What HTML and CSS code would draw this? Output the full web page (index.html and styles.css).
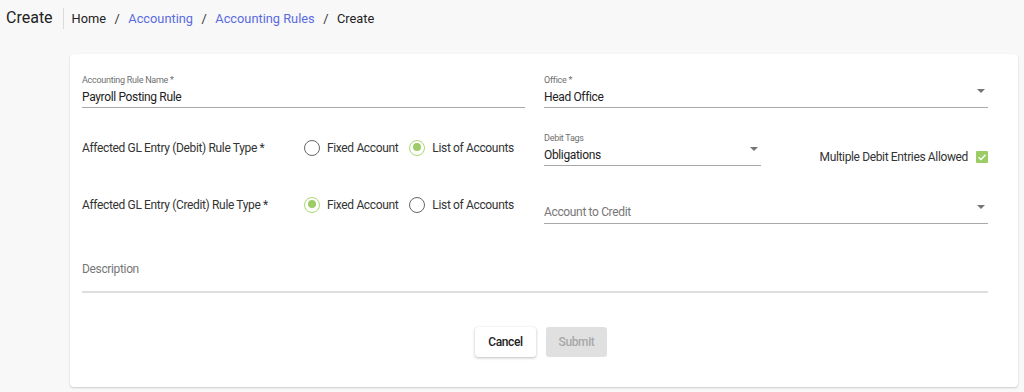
FILE: index.html
```html
<!DOCTYPE html>
<html>
<head>
<meta charset="utf-8">
<link rel="stylesheet" href="styles.css">
</head>
<body>
<header class="topbar">
  <h1 class="page-title">Create</h1>
  <nav class="crumbs">
    <span class="crumb">Home</span>
    <span class="sep">/</span>
    <a class="crumb link">Accounting</a>
    <span class="sep">/</span>
    <a class="crumb link">Accounting Rules</a>
    <span class="sep">/</span>
    <span class="crumb">Create</span>
  </nav>
</header>

<main class="card">
  <form class="form">
    <div class="row two">
      <div class="field">
        <div class="flabel">Accounting Rule Name *</div>
        <div class="fvalue">Payroll Posting Rule</div>
      </div>
      <div class="field select">
        <div class="flabel">Office *</div>
        <div class="fvalue">Head Office</div>
        <span class="arrow"></span>
      </div>
    </div>

    <div class="row two">
      <div class="radio-row">
        <span class="rlabel">Affected GL Entry (Debit) Rule Type *</span>
        <span class="radio"><span class="dot"></span>Fixed Account</span>
        <span class="radio on"><span class="dot"></span>List of Accounts</span>
      </div>
      <div class="debit-side">
        <div class="field select tags">
          <div class="flabel">Debit Tags</div>
          <div class="fvalue">Obligations</div>
          <span class="arrow"></span>
        </div>
        <div class="check">
          <span>Multiple Debit Entries Allowed</span>
          <span class="box"><svg width="12" height="12" viewBox="0 0 12 12"><path d="M2.6 6.2 L5 8.5 L9.6 3.8" fill="none" stroke="#fff" stroke-width="1.3"/></svg></span>
        </div>
      </div>
    </div>

    <div class="row two">
      <div class="radio-row credit">
        <span class="rlabel">Affected GL Entry (Credit) Rule Type *</span>
        <span class="radio on"><span class="dot"></span>Fixed Account</span>
        <span class="radio"><span class="dot"></span>List of Accounts</span>
      </div>
      <div class="field select">
        <div class="flabel"></div>
        <div class="fvalue placeholder">Account to Credit</div>
        <span class="arrow"></span>
      </div>
    </div>

    <div class="row">
      <div class="field textarea">
        <div class="flabel"></div>
        <div class="fvalue placeholder">Description</div>
      </div>
    </div>

    <div class="actions">
      <button type="button" class="btn cancel">Cancel</button>
      <button type="button" class="btn submit" disabled>Submit</button>
    </div>
  </form>
</main>
</body>
</html>
```

FILE: styles.css
```css
* { box-sizing: border-box; }
html, body { margin: 0; padding: 0; }
body {
  background: #f8f8f8;
  font-family: Roboto, "Liberation Sans", sans-serif;
  color: #222;
  width: 1024px;
  height: 392px;
  overflow: hidden;
}

.topbar {
  display: flex;
  align-items: center;
  height: 36px;
  padding: 0 0 0 6px;
}
.page-title {
  margin: 0;
  font-size: 16px;
  font-weight: 400;
  color: #222;
  padding-right: 10px;
  line-height: 20px;
}
.crumbs {
  display: flex;
  align-items: center;
  border-left: 1px solid #dcdcdc;
  padding-left: 8px;
  height: 21px;
  font-size: 12.8px;
  color: #222;
}
.crumb { line-height: 21px; white-space: nowrap; }
.link { color: #5a6be0; text-decoration: none; }
.sep { padding: 0 8.5px 0 8.5px; color: #333; }

.card {
  margin: 18px 6px 0 70px;
  width: 948px;
  height: 333px;
  background: #fff;
  border-radius: 4px;
  box-shadow: 0 1px 2px rgba(0,0,0,0.18), 0 0 1px rgba(0,0,0,0.06);
  padding: 20px 30px 0 12px;
}

.form { display: flex; flex-direction: column; }
.row { display: grid; grid-template-columns: 1fr; margin-bottom: 24px; }
.row.two { grid-template-columns: 443px 444px; column-gap: 19px; }

.field {
  position: relative;
  border-bottom: 1px solid #a8a8a8;
  padding-bottom: 1px;
}
.flabel {
  font-size: 9px;
  letter-spacing: -0.27px;
  line-height: 12px;
  height: 12px;
  color: #6f6f6f;
  margin-bottom: 2px;
}
.fvalue {
  font-size: 12px;
  letter-spacing: -0.35px;
  line-height: 18px;
  height: 18px;
  color: #222;
  white-space: nowrap;
}
.fvalue.placeholder { color: #777; margin-top: -1px; margin-bottom: 1px; }
.arrow {
  position: absolute;
  right: 3px;
  bottom: 14px;
  width: 0; height: 0;
  border-left: 4.5px solid transparent;
  border-right: 4.5px solid transparent;
  border-top: 4.5px solid #757575;
}

.radio-row {
  display: flex;
  align-items: center;
  font-size: 12px;
  letter-spacing: -0.35px;
  color: #333;
  margin-top: -3px;
  white-space: nowrap;
}
.radio-row.credit { margin-top: -5px; }
.rlabel { width: 222px; flex-shrink: 0; }
.radio {
  display: inline-flex;
  align-items: center;
  margin-right: 11px;
  flex-shrink: 0;
}
.radio .dot {
  width: 16px; height: 16px;
  border-radius: 50%;
  border: 1.5px solid #666;
  margin-right: 7px;
  position: relative;
}
.radio.on .dot { border-color: #aad870; }
.radio.on .dot::after {
  content: "";
  position: absolute;
  left: 2.5px; top: 2.5px;
  width: 8px; height: 8px;
  border-radius: 50%;
  background: #9ccc65;
}

.debit-side { display: flex; align-items: flex-end; }
.field.tags { width: 217px; }
.check {
  margin-left: auto;
  display: flex;
  align-items: center;
  font-size: 12px;
  letter-spacing: -0.36px;
  color: #333;
  padding-bottom: 2px;
  white-space: nowrap;
}
.box {
  width: 12px; height: 12px;
  background: #9ccc65;
  margin-left: 8px;
  border-radius: 1px;
  display: flex;
}

.field.textarea {
  border-bottom: 2px solid #dedede;
  height: 45px;
}
.field.textarea .fvalue { margin-top: -2px; }

.actions {
  display: flex;
  justify-content: center;
  gap: 10px;
  padding-left: 12px;
  margin-top: 10px;
}
.btn {
  font-family: Roboto, "Liberation Sans", sans-serif;
  font-size: 12px;
  letter-spacing: -0.4px;
  font-weight: 500;
  height: 30px;
  width: 61px;
  border: none;
  border-radius: 3px;
  padding: 0;
}
.cancel {
  background: #fff;
  color: #222;
  box-shadow: 0 1px 3px rgba(0,0,0,0.25), 0 0 1px rgba(0,0,0,0.1);
}
.submit {
  background: #e0e0e0;
  color: #a8a8a8;
}
```
